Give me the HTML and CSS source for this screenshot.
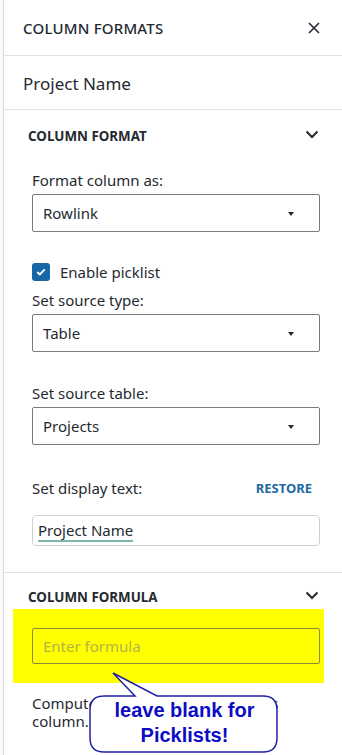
FILE: index.html
```html
<!DOCTYPE html>
<html lang="en">
<head>
    <meta charset="UTF-8">
    <meta name="viewport" content="width=device-width, initial-scale=1.0">
    <title>Column formats</title>
    <link rel="stylesheet" href="styles.css">
</head>
<body>
<div class="panel">
    <!-- Шапка панели -->
    <div class="panel-head">
        <span class="panel-title">COLUMN FORMATS</span>
        <svg class="close" width="12" height="12" viewBox="0 0 12 12">
            <path d="M1 1 L11 11 M11 1 L1 11" stroke="#252a31" stroke-width="1.6" fill="none"/>
        </svg>
    </div>
    <div class="column-name">Project Name</div>

    <!-- Формат колонки -->
    <div class="section">
        <div class="section-head">
            <span>COLUMN FORMAT</span>
            <svg class="chevron" width="14" height="9" viewBox="0 0 14 9">
                <path d="M1.5 1.5 L7 7 L12.5 1.5" stroke="#252a31" stroke-width="2" fill="none"/>
            </svg>
        </div>
        <div class="section-body">
            <div class="label first">Format column as:</div>
            <div class="select">Rowlink<span class="caret"></span></div>

            <div class="check-row">
                <span class="checkbox">
                    <svg width="10" height="8" viewBox="0 0 10 8">
                        <path d="M1.2 4 L3.8 6.4 L8.8 1.4" stroke="#fff" stroke-width="1.8" fill="none"/>
                    </svg>
                </span>
                Enable picklist
            </div>
            <div class="label tight">Set source type:</div>
            <div class="select">Table<span class="caret"></span></div>

            <div class="label wide">Set source table:</div>
            <div class="select">Projects<span class="caret"></span></div>

            <div class="label-row">
                <span>Set display text:</span>
                <span class="restore">RESTORE</span>
            </div>
            <div class="text-input"><span class="spell">Project Name</span></div>
        </div>
    </div>

    <!-- Формула колонки -->
    <div class="section formula">
        <div class="section-head small">
            <span>COLUMN FORMULA</span>
            <svg class="chevron" width="14" height="9" viewBox="0 0 14 9">
                <path d="M1.5 1.5 L7 7 L12.5 1.5" stroke="#252a31" stroke-width="2" fill="none"/>
            </svg>
        </div>
        <div class="highlight">
            <div class="formula-input">Enter formula</div>
        </div>
        <p class="hint">Computed values are shown in this column.</p>
    </div>

    <!-- Выноска поверх подсказки -->
    <div class="callout">
        <svg width="194" height="84" viewBox="88 671 194 84">
            <path d="M103 696 L135 696 L113 673 L157 696 L263 696 Q277 696 277 710 L277 738 Q277 752 263 752 L104 752 Q90 752 90 738 L90 710 Q90 696 104 696 Z"
                  fill="#fff" stroke="#2020a8" stroke-width="1.5"/>
        </svg>
        <div class="callout-text">leave blank for<br>Picklists!</div>
    </div>
</div>
</body>
</html>
```

FILE: styles.css
```css
:root {
    --color-text: #252a31;
    --color-line: #e1e1e1;
    --color-select-border: #7a7a7a;
    --color-blue: #1766a8;
}

body {
    margin: 0;
    background: #fafafa;
    font-family: "Noto Sans", "Open Sans", sans-serif;
    color: var(--color-text);
}

.panel {
    position: relative;
    margin-left: 3px;
    height: 755px;
    background: #fff;
    border-left: 1px solid #dadada;
    overflow: hidden;
}

.panel-head {
    display: flex;
    align-items: center;
    justify-content: space-between;
    height: 55px;
    padding: 0 22px 0 19px;
    border-bottom: 1px solid var(--color-line);
}

.panel-title {
    font-size: 15px;
    font-weight: 500;
    letter-spacing: 0.2px;
}

.column-name {
    height: 53px;
    line-height: 56px;
    padding-left: 19px;
    font-size: 17px;
    border-bottom: 1px solid var(--color-line);
}

.section {
    border-bottom: 1px solid var(--color-line);
    padding-bottom: 26px;
}

.section-head {
    display: flex;
    align-items: center;
    justify-content: space-between;
    height: 52px;
    padding: 0 23px 0 24px;
    font-size: 13.4px;
    font-weight: 700;
}

.section-head .chevron {
    margin-top: -4px;
}

.section-body {
    padding: 0 22px 0 28px;
}

.label {
    font-size: 15px;
    line-height: 20px;
    margin-bottom: 4px;
}

.label.first {
    margin-top: 8px;
}

.label.tight {
    margin-top: 8px;
}

.label.wide {
    margin-top: 31px;
}

.select {
    position: relative;
    height: 36px;
    line-height: 36px;
    padding-left: 10px;
    font-size: 15px;
    border: 1px solid var(--color-select-border);
    border-radius: 2px;
}

.caret {
    position: absolute;
    right: 25px;
    top: 17px;
    border-left: 3.5px solid transparent;
    border-right: 3.5px solid transparent;
    border-top: 4px solid #252a31;
}

.check-row {
    display: flex;
    align-items: center;
    gap: 10px;
    margin-top: 30px;
    height: 20px;
    font-size: 15px;
}

.checkbox {
    display: flex;
    align-items: center;
    justify-content: center;
    width: 18px;
    height: 18px;
    border-radius: 3px;
    background: var(--color-blue);
}

.label-row {
    display: flex;
    justify-content: space-between;
    margin-top: 33px;
    line-height: 20px;
    font-size: 15px;
}

.restore {
    margin-right: 8px;
    font-size: 13px;
    font-weight: 700;
    color: #1f6aa4;
}

.text-input {
    margin-top: 17px;
    height: 29px;
    line-height: 29px;
    padding-left: 5px;
    font-size: 15px;
    border: 1px solid #cfcfcf;
    border-radius: 4px;
}

.spell {
    border-bottom: 2px solid #7ab8ae;
    padding-bottom: 0;
}

.section.formula {
    border-bottom: none;
}

.section-head.small {
    height: auto;
    padding-top: 14px;
    line-height: 20px;
    margin-bottom: 2px;
}

.highlight {
    margin-left: 9px;
    width: 288px;
    padding: 19px 4px 19px 19px;
    background: #ffff00;
}

.formula-input {
    height: 34px;
    line-height: 34px;
    padding-left: 10px;
    font-size: 15px;
    color: #b5b24a;
    border: 1px solid #8a8a3a;
    border-radius: 2px;
}

.hint {
    margin: 11px 22px 0 28px;
    font-size: 15px;
    line-height: 18px;
}

.callout {
    position: absolute;
    left: 84px;
    top: 671px;
    width: 194px;
    height: 84px;
}

.callout svg {
    display: block;
}

.callout-text {
    position: absolute;
    left: 2px;
    top: 27px;
    width: 189px;
    text-align: center;
    font-family: "Liberation Sans", Arial, sans-serif;
    font-size: 20px;
    font-weight: 700;
    line-height: 25px;
    color: #0c0cc4;
}
```
